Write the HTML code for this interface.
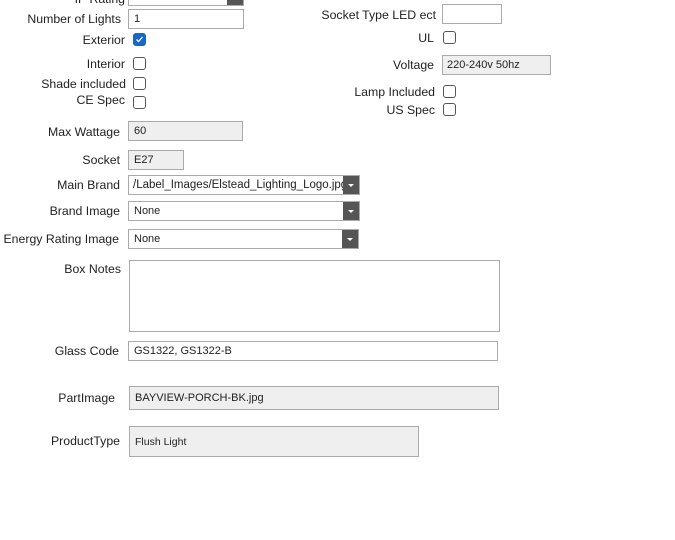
<!DOCTYPE html>
<html><head><style>
body{margin:0;width:675px;height:540px;background:#fff;font-family:"Liberation Sans",Arial,sans-serif;font-size:12px;color:#222;position:relative;overflow:hidden}
.l{position:absolute;text-align:right;white-space:nowrap;line-height:14px;font-size:12.3px}
.i{position:absolute;box-sizing:border-box;border:1px solid #aaa;background:#fff;font-size:11px;padding-left:5px;white-space:nowrap;overflow:hidden}
.g{background:#efefef}
.c{position:absolute;box-sizing:border-box;width:13px;height:13px;border:1px solid #555;border-radius:3px;background:#fff}
.s .b{position:absolute;right:0;top:0;bottom:0;width:16px;background:#555}
.s .b:after{content:"";position:absolute;left:5px;top:8px;border-left:3px solid transparent;border-right:3px solid transparent;border-top:3px solid #fff}
</style></head><body>
<div class="l" style="right:550px;top:-8px">IP Rating</div>
<div class="i s" style="left:128px;top:-14px;width:116px;height:20px"><span class="b"></span></div>

<div class="l" style="right:554px;top:12px">Number of Lights</div>
<div class="i" style="left:128px;top:9px;width:116px;height:20px;line-height:18px">1</div>

<div class="l" style="right:550px;top:33px">Exterior</div>
<div class="c" style="left:133px;top:33px;background:#1a66c4;border-color:#1a66c4"><svg width="11" height="11" style="position:absolute;left:0;top:0"><path d="M2.5 5.5l2 2 4-4.5" stroke="#fff" stroke-width="1.3" fill="none"/></svg></div>

<div class="l" style="right:550px;top:57px">Interior</div>
<div class="c" style="left:133px;top:57px"></div>
<div class="l" style="right:549px;top:77px">Shade included</div>
<div class="c" style="left:133px;top:77px"></div>
<div class="l" style="right:550px;top:93px">CE Spec</div>
<div class="c" style="left:133px;top:96px"></div>

<div class="l" style="right:555px;top:125px">Max Wattage</div>
<div class="i g" style="left:128px;top:121px;width:115px;height:20px;line-height:18px">60</div>

<div class="l" style="right:555px;top:153px">Socket</div>
<div class="i g" style="left:128px;top:150px;width:56px;height:20px;line-height:18px">E27</div>

<div class="l" style="right:555px;top:178px">Main Brand</div>
<div class="i s" style="left:128px;top:175px;width:232px;height:20px;line-height:18px;padding-left:4px;font-size:11.5px">/Label_Images/Elstead_Lighting_Logo.jpg<span class="b"></span></div>

<div class="l" style="right:555px;top:204px">Brand Image</div>
<div class="i s" style="left:128px;top:201px;width:232px;height:20px;line-height:18px">None<span class="b"></span></div>

<div class="l" style="right:556px;top:232px">Energy Rating Image</div>
<div class="i s" style="left:128px;top:229px;width:231px;height:20px;line-height:18px">None<span class="b"></span></div>

<div class="l" style="right:554px;top:262px">Box Notes</div>
<div class="i" style="left:129px;top:260px;width:371px;height:72px"></div>

<div class="l" style="right:556px;top:344px">Glass Code</div>
<div class="i" style="left:128px;top:341px;width:370px;height:20px;line-height:18px">GS1322, GS1322-B</div>

<div class="l" style="right:560px;top:391px">PartImage</div>
<div class="i g" style="left:129px;top:386px;width:370px;height:24px;line-height:22px">BAYVIEW-PORCH-BK.jpg</div>

<div class="l" style="right:555px;top:434px">ProductType</div>
<div class="i g" style="left:129px;top:426px;width:290px;height:31px;line-height:31px;font-size:10.5px">Flush Light</div>

<div class="l" style="right:239px;top:8px">Socket Type LED ect</div>
<div class="i" style="left:442px;top:4px;width:60px;height:20px"></div>
<div class="l" style="right:241px;top:31px">UL</div>
<div class="c" style="left:443px;top:31px"></div>
<div class="l" style="right:241px;top:58px">Voltage</div>
<div class="i g" style="left:442px;top:55px;width:109px;height:20px;line-height:18px;padding-left:4px">220-240v 50hz</div>
<div class="l" style="right:240px;top:85px">Lamp Included</div>
<div class="c" style="left:443px;top:85px"></div>
<div class="l" style="right:240px;top:103px">US Spec</div>
<div class="c" style="left:443px;top:103px"></div>
</body></html>
